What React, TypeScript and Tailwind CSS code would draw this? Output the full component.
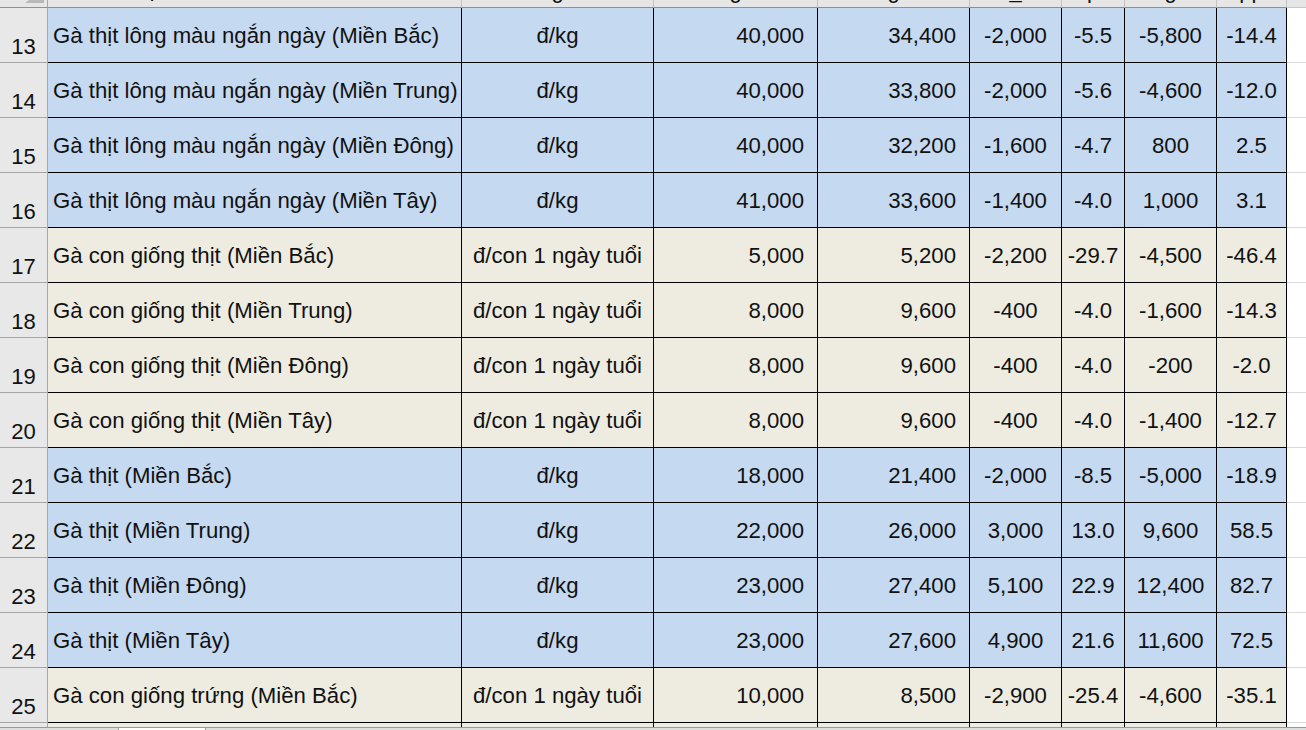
import React from "react";

type Row = {
  n: number;
  name: string;
  unit: string;
  vals: string[];
  tone: "blue" | "tan";
};

const rows: Row[] = [
  { n: 13, name: "Gà thịt lông màu ngắn ngày (Miền Bắc)", unit: "đ/kg", vals: ["40,000", "34,400", "-2,000", "-5.5", "-5,800", "-14.4"], tone: "blue" },
  { n: 14, name: "Gà thịt lông màu ngắn ngày (Miền Trung)", unit: "đ/kg", vals: ["40,000", "33,800", "-2,000", "-5.6", "-4,600", "-12.0"], tone: "blue" },
  { n: 15, name: "Gà thịt lông màu ngắn ngày (Miền Đông)", unit: "đ/kg", vals: ["40,000", "32,200", "-1,600", "-4.7", "800", "2.5"], tone: "blue" },
  { n: 16, name: "Gà thịt lông màu ngắn ngày (Miền Tây)", unit: "đ/kg", vals: ["41,000", "33,600", "-1,400", "-4.0", "1,000", "3.1"], tone: "blue" },
  { n: 17, name: "Gà con giống thịt (Miền Bắc)", unit: "đ/con 1 ngày tuổi", vals: ["5,000", "5,200", "-2,200", "-29.7", "-4,500", "-46.4"], tone: "tan" },
  { n: 18, name: "Gà con giống thịt (Miền Trung)", unit: "đ/con 1 ngày tuổi", vals: ["8,000", "9,600", "-400", "-4.0", "-1,600", "-14.3"], tone: "tan" },
  { n: 19, name: "Gà con giống thịt (Miền Đông)", unit: "đ/con 1 ngày tuổi", vals: ["8,000", "9,600", "-400", "-4.0", "-200", "-2.0"], tone: "tan" },
  { n: 20, name: "Gà con giống thịt (Miền Tây)", unit: "đ/con 1 ngày tuổi", vals: ["8,000", "9,600", "-400", "-4.0", "-1,400", "-12.7"], tone: "tan" },
  { n: 21, name: "Gà thịt (Miền Bắc)", unit: "đ/kg", vals: ["18,000", "21,400", "-2,000", "-8.5", "-5,000", "-18.9"], tone: "blue" },
  { n: 22, name: "Gà thịt (Miền Trung)", unit: "đ/kg", vals: ["22,000", "26,000", "3,000", "13.0", "9,600", "58.5"], tone: "blue" },
  { n: 23, name: "Gà thịt (Miền Đông)", unit: "đ/kg", vals: ["23,000", "27,400", "5,100", "22.9", "12,400", "82.7"], tone: "blue" },
  { n: 24, name: "Gà thịt (Miền Tây)", unit: "đ/kg", vals: ["23,000", "27,600", "4,900", "21.6", "11,600", "72.5"], tone: "blue" },
  { n: 25, name: "Gà con giống trứng (Miền Bắc)", unit: "đ/con 1 ngày tuổi", vals: ["10,000", "8,500", "-2,900", "-25.4", "-4,600", "-35.1"], tone: "tan" },
];

// value columns C..H: width and alignment
const valCols = [
  { w: "w-[164px]", cls: "justify-end pr-[13px]" },
  { w: "w-[152px]", cls: "justify-end pr-[13px]" },
  { w: "w-[92px]", cls: "justify-center" },
  { w: "w-[63px]", cls: "justify-center" },
  { w: "w-[92px]", cls: "justify-center" },
  { w: "w-[70px]", cls: "justify-center" },
];

// bits of the header row that peek out above row 13
const headBits = [
  { w: "w-[414px]", t: "ạ", cls: "justify-start pl-[98px]" },
  { w: "w-[192px]", t: "g", cls: "justify-center" },
  { w: "w-[164px]", t: "g", cls: "justify-center" },
  { w: "w-[152px]", t: "g", cls: "justify-center" },
  { w: "w-[92px]", t: "_", cls: "justify-center" },
  { w: "w-[63px]", t: "p", cls: "justify-center" },
  { w: "w-[92px]", t: "g", cls: "justify-center" },
  { w: "w-[70px]", t: "pp", cls: "justify-center" },
];

function App() {
  return (
    <div className="w-[1306px] h-[730px] overflow-hidden bg-white text-[#111] font-['Liberation_Sans',Arial,sans-serif]">
      {/* header strip */}
      <div className="flex h-[8px]">
        <div className="w-[48px] h-full shrink-0 bg-[#e6e6e6] border-r border-b border-r-[#a8a8a8] border-b-[#8f8f8f]">
          <svg width="47" height="7" viewBox="0 0 47 7">
            <polygon points="29,0 44,0 44,3 25,3" fill="#b8b8b8" />
          </svg>
        </div>
        {headBits.map((h, i) => (
          <div key={i} className={`${h.w} h-full shrink-0 flex overflow-hidden bg-[#e6e6e6] border-r border-b border-r-[#c2c2c2] border-b-[#8f8f8f] ${h.cls}`}>
            <span className="text-[22px] leading-[22px] -mt-[20px]">{h.t}</span>
          </div>
        ))}
        <div className="flex-1 h-full bg-[#e6e6e6] border-b border-b-[#c8c8c8]" />
      </div>

      {rows.map((r) => {
        const bg = r.tone === "blue" ? "bg-[#c5d9f1]" : "bg-[#eeece1]";
        return (
          <div key={r.n} className="flex h-[55px] text-[22.2px]">
            <div className="w-[48px] shrink-0 flex items-end justify-center pb-[4px] text-[22px] leading-none bg-[#e8e8e8] border-r border-b border-r-[#a8a8a8] border-b-[#a6a6a6]">
              {r.n}
            </div>
            <div className={`w-[414px] shrink-0 flex items-center pl-[5px] pt-[2px] whitespace-nowrap overflow-hidden border-r border-b border-black ${bg}`}>
              {r.name}
            </div>
            <div className={`w-[192px] shrink-0 flex items-center justify-center pt-[2px] whitespace-nowrap border-r border-b border-black ${bg}`}>
              {r.unit}
            </div>
            {r.vals.map((v, i) => (
              <div key={i} className={`${valCols[i].w} shrink-0 flex items-center pt-[2px] whitespace-nowrap border-r border-b border-black ${valCols[i].cls} ${bg}`}>
                {v}
              </div>
            ))}
            <div className="flex-1 border-b border-b-[#d9d9d9]" />
          </div>
        );
      })}

      {/* row 26 sliver */}
      <div className="flex h-[4px]">
        <div className="w-[48px] shrink-0 bg-[#e8e8e8] border-r border-r-[#a8a8a8]" />
        <div className="w-[414px] shrink-0 bg-[#eeece1] border-r border-black" />
        <div className="w-[192px] shrink-0 bg-[#eeece1] border-r border-black" />
        {valCols.map((c, i) => (
          <div key={i} className={`${c.w} shrink-0 bg-[#eeece1] border-r border-black`} />
        ))}
        <div className="flex-1" />
      </div>

      {/* sheet tab bar */}
      <div className="flex h-[3px] border-t border-t-[#9a9a9a] bg-[#dedede]">
        <div className="w-[118px] shrink-0" />
        <div className="w-[88px] shrink-0 bg-white border-l border-r border-[#a0a0a0]" />
        <div className="flex-1" />
      </div>
    </div>
  );
}

export default App;
